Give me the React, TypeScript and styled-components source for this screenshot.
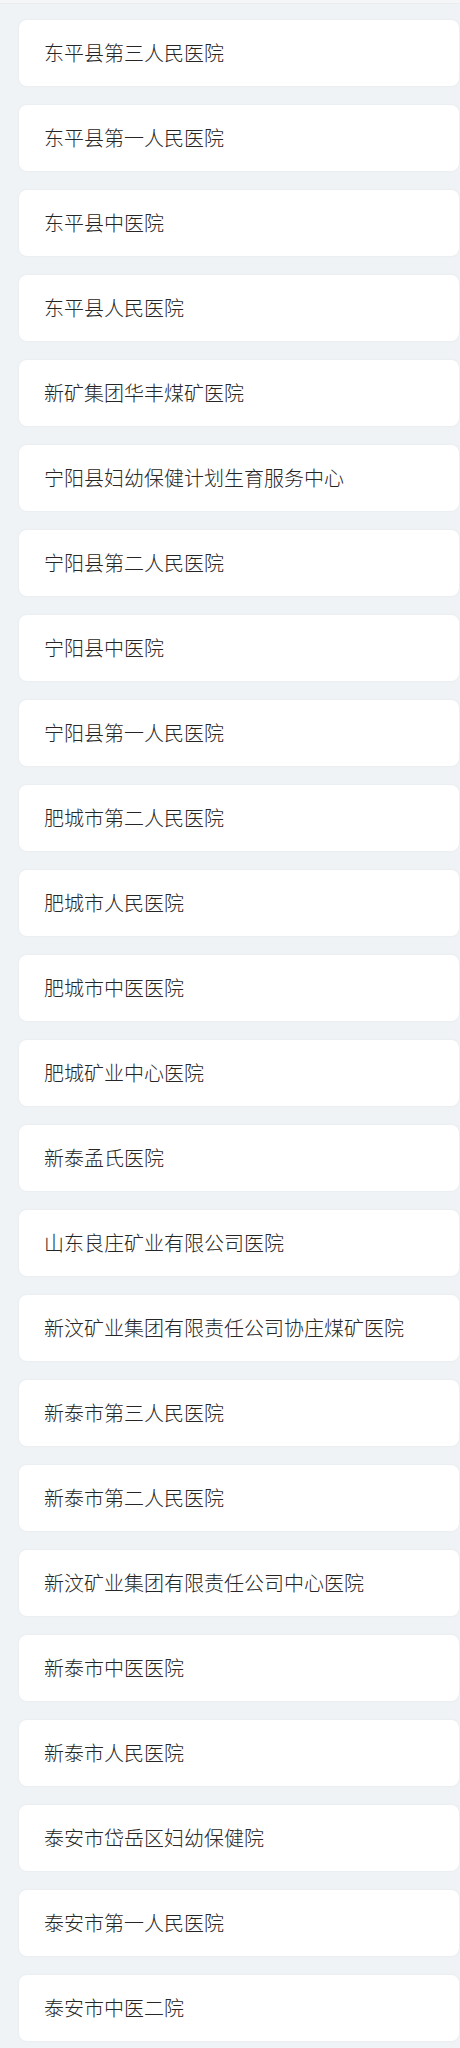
import styled, { createGlobalStyle } from "styled-components";

const hospitals = [
  "东平县第三人民医院",
  "东平县第一人民医院",
  "东平县中医院",
  "东平县人民医院",
  "新矿集团华丰煤矿医院",
  "宁阳县妇幼保健计划生育服务中心",
  "宁阳县第二人民医院",
  "宁阳县中医院",
  "宁阳县第一人民医院",
  "肥城市第二人民医院",
  "肥城市人民医院",
  "肥城市中医医院",
  "肥城矿业中心医院",
  "新泰孟氏医院",
  "山东良庄矿业有限公司医院",
  "新汶矿业集团有限责任公司协庄煤矿医院",
  "新泰市第三人民医院",
  "新泰市第二人民医院",
  "新汶矿业集团有限责任公司中心医院",
  "新泰市中医医院",
  "新泰市人民医院",
  "泰安市岱岳区妇幼保健院",
  "泰安市第一人民医院",
  "泰安市中医二院",
];

const GlobalStyle = createGlobalStyle`
  html, body {
    margin: 0;
    padding: 0;
    background: #f0f3f6;
    font-family: "Noto Sans CJK SC", "Noto Sans", sans-serif;
  }
`;

const App = () => {
  return (
    <>
      <GlobalStyle />
      <StPage>
        <StTopBar />
        <StList>
          {hospitals.map((name) => (
            <StCard key={name}>{name}</StCard>
          ))}
        </StList>
      </StPage>
    </>
  );
};

export default App;

const StPage = styled.div`
  width: 460px;
  min-height: 2048px;
  background: #f0f3f6;
`;

const StTopBar = styled.div`
  height: 3px;
  background: #f4f6f8;
  border-bottom: 1px solid #e9edf0;
`;

const StList = styled.div`
  display: flex;
  flex-direction: column;
  gap: 19px;
  padding: 16px 1px 0 19px;
`;

const StCard = styled.div`
  display: flex;
  align-items: center;
  height: 66px;
  padding: 0 0 0 25px;
  box-sizing: border-box;
  background: #ffffff;
  border-radius: 8px;
  box-shadow: 0 0 3px rgba(0, 0, 0, 0.05);
  font-size: 20px;
  font-weight: 300;
  color: #262626;
  line-height: 1;
`;
